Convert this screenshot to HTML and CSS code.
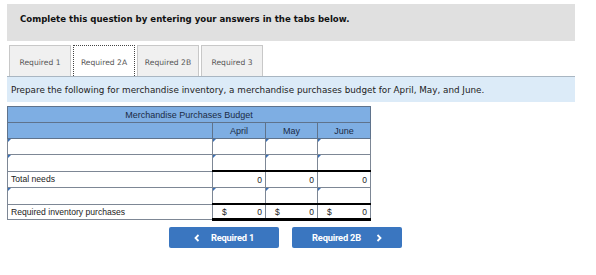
FILE: index.html
```html
<!DOCTYPE html>
<html>
<head>
<meta charset="utf-8">
<link rel="stylesheet" href="styles.css">
</head>
<body>
<div class="page">
  <div class="banner">Complete this question by entering your answers in the tabs below.</div>
  <div class="tabs">
    <div class="tab">Required 1</div>
    <div class="tab active">Required 2A</div>
    <div class="tab">Required 2B</div>
    <div class="tab">Required 3</div>
  </div>
  <div class="prompt">Prepare the following for merchandise inventory, a merchandise purchases budget for April, May, and June.</div>
  <table class="budget">
    <colgroup>
      <col class="c-label"><col class="c-num"><col class="c-num2"><col class="c-num">
    </colgroup>
    <tr class="h1"><th colspan="4">Merchandise Purchases Budget</th></tr>
    <tr class="h2"><th></th><th>April</th><th>May</th><th>June</th></tr>
    <tr class="in"><td class="dd"></td><td class="dd"></td><td class="dd"></td><td class="dd"></td></tr>
    <tr class="in"><td class="dd"></td><td class="dd"></td><td class="dd"></td><td class="dd"></td></tr>
    <tr class="total"><td class="lbl">Total needs</td><td class="num">0</td><td class="num">0</td><td class="num">0</td></tr>
    <tr class="in"><td class="dd"></td><td class="dd"></td><td class="dd"></td><td class="dd"></td></tr>
    <tr class="final"><td class="lbl">Required inventory purchases</td><td class="num"><span class="cur">$</span>0</td><td class="num"><span class="cur">$</span>0</td><td class="num"><span class="cur">$</span>0</td></tr>
  </table>
  <div class="nav">
    <div class="btn"><svg class="chev" width="6" height="8" viewBox="0 0 6 8"><polyline points="4.5,1 1.5,4 4.5,7" fill="none" stroke="#fff" stroke-width="1.8"/></svg>Required 1</div>
    <div class="btn">Required 2B<svg class="chev r" width="6" height="8" viewBox="0 0 6 8"><polyline points="1.5,1 4.5,4 1.5,7" fill="none" stroke="#fff" stroke-width="1.8"/></svg></div>
  </div>
</div>
</body>
</html>
```
FILE: styles.css
```css
html, body { margin: 0; padding: 0; background: #fff; }
.page { width: 596px; padding-top: 4px; font-family: "DejaVu Sans", Verdana, sans-serif; }
.banner {
  margin-left: 7px; width: 568px; height: 37px; box-sizing: border-box;
  background: #e0e0e0; font-weight: bold; font-size: 8.6px; color: #111;
  padding: 10px 0 0 13px;
}
.tabs { display: flex; gap: 2px; margin: 4px 0 0 9px; height: 31px; }
.tab {
  width: 62px; box-sizing: border-box; height: 31px; background: #f0f0f0;
  border: 1px solid #c8c8c8; border-bottom: none; font-size: 7.6px; color: #555;
  display: flex; align-items: center; justify-content: center; padding-top: 2px;
}
.tab.active { background: #fff; border: 1px dotted #444; border-bottom: none; }
.prompt {
  margin-left: 7px; width: 568px; height: 26px; box-sizing: border-box;
  background: #dcebf8; border-top: 1px solid #a9b6c2; font-size: 8.8px; color: #222;
  padding: 8px 0 0 4px;
}
.budget {
  margin: 4px 0 0 7px; border-collapse: collapse; table-layout: fixed; width: 363px;
  font-family: "Liberation Sans", Arial, sans-serif; font-size: 8.5px; color: #222;
  border: 1px solid #6e7b8c;
}
.c-label { width: 205px; } .c-num { width: 53px; } .c-num2 { width: 52px; }
.budget th { background: #7eaee3; font-weight: normal; color: #1b2b45; height: 15px; padding: 0; border: 1px solid #5f738c; font-size: 9px; }
.budget .h1 th { text-align: center; }
.budget .h2 th { text-align: center; }
.budget td { height: 15px; padding: 0 3px; border: 1px solid #7d8795; background: #fff; position: relative; }
.dd::before {
  content: ""; position: absolute; left: 0; top: 0;
  border-left: 3px solid #3a6fb4; border-bottom: 3px solid transparent; border-top: 0;
}
.lbl { font-size: 8.6px; }
.num { text-align: right; }
.total .num { border-top: 2px solid #000; }
.final td { height: 13px; }
.final .num { border-top: 2px solid #000; border-bottom: 3px solid #000; }
.cur { float: left; padding-left: 6px; }
.nav { display: flex; gap: 13px; margin: 6px 0 0 169px; }
.btn {
  width: 110px; height: 21px; background: #3a76c0; color: #fff; border-radius: 2px;
  font-family: Roboto, "Liberation Sans", sans-serif; font-weight: bold; font-size: 9.3px;
  display: flex; align-items: center; justify-content: center; letter-spacing: -0.2px;
}
.chev { margin-right: 11px; }
.chev.r { margin-right: 0; margin-left: 15px; }
```
